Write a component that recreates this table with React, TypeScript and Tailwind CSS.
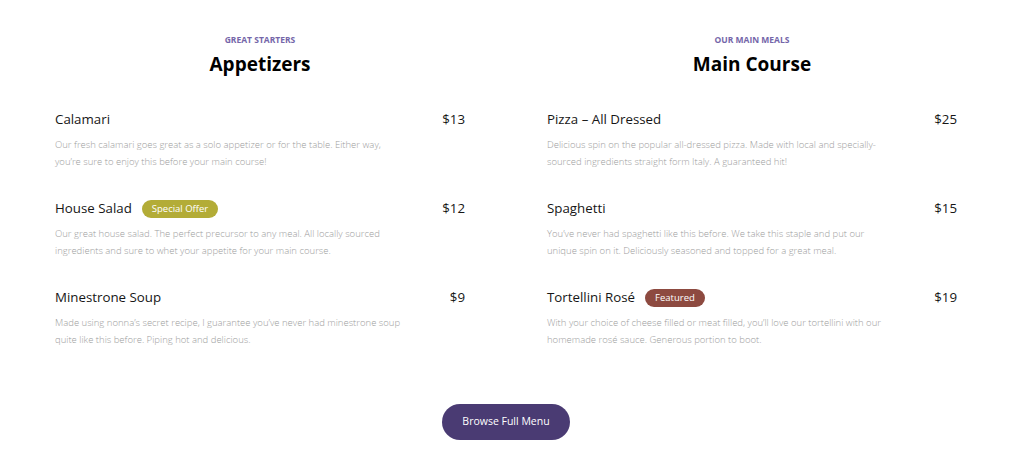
import React from "react";

type Item = { name: string; price: string; desc: string; w?: string; badge?: { text: string; cls: string } };

const appetizers: Item[] = [
  {
    name: "Calamari",
    price: "$13",
    desc: "Our fresh calamari goes great as a solo appetizer or for the table. Either way, you\u2019re sure to enjoy this before your main course!",
  },
  {
    name: "House Salad",
    price: "$12",
    desc: "Our great house salad. The perfect precursor to any meal. All locally sourced ingredients and sure to whet your appetite for your main course.",
    badge: { text: "Special Offer", cls: "bg-[#b3ac37]" },
  },
  {
    name: "Minestrone Soup",
    price: "$9",
    desc: "Made using nonna\u2019s secret recipe, I guarantee you\u2019ve never had minestrone soup quite like this before. Piping hot and delicious.",
    w: "w-[354px]",
  },
];

const mains: Item[] = [
  {
    name: "Pizza \u2013 All Dressed",
    price: "$25",
    desc: "Delicious spin on the popular all-dressed pizza. Made with local and specially-sourced ingredients straight form Italy. A guaranteed hit!",
  },
  {
    name: "Spaghetti",
    price: "$15",
    desc: "You\u2019ve never had spaghetti like this before. We take this staple and put our unique spin on it. Deliciously seasoned and topped for a great meal.",
  },
  {
    name: "Tortellini Ros\u00e9",
    price: "$19",
    desc: "With your choice of cheese filled or meat filled, you\u2019ll love our tortellini with our homemade ros\u00e9 sauce. Generous portion to boot.",
    badge: { text: "Featured", cls: "bg-[#8d4a40]" },
  },
];

function Column({ kicker, title, items }: { kicker: string; title: string; items: Item[] }) {
  return (
    <div className="w-[410px] flex flex-col">
      <div className="flex flex-col items-center">
        <div className="text-[8.5px] font-bold text-[#7466a9] leading-[12px] mt-[34px]">{kicker}</div>
        <div className="text-[19px] font-bold text-black leading-[24px] mt-[6px]">{title}</div>
      </div>
      <div className="flex flex-col mt-[33px] gap-[28px]">
        {items.map((it) => (
          <div key={it.name} className="flex flex-col">
            <div className="flex items-center justify-between h-[22px]">
              <div className="flex items-center">
                <span className="text-[13.3px] text-[#161616]">{it.name}</span>
                {it.badge && (
                  <span
                    className={`ml-[10px] h-[18px] px-[10px] rounded-full text-white text-[9.5px] leading-[18px] ${it.badge.cls}`}
                  >
                    {it.badge.text}
                  </span>
                )}
              </div>
              <span className="text-[13.3px] text-[#161616]">{it.price}</span>
            </div>
            <p className={`mt-[5px] text-[9.5px] font-light leading-[17px] text-[#9d9d9d] ${it.w ?? "w-[344px]"}`}>
              {it.desc}
            </p>
          </div>
        ))}
      </div>
    </div>
  );
}

export default function App() {
  return (
    <div
      className="w-[1024px] h-[460px] bg-white pl-[55px] flex flex-col"
      style={{ fontFamily: '"Open Sans", "Noto Sans", sans-serif' }}
    >
      <div className="flex gap-[82px]">
        <Column kicker="GREAT STARTERS" title="Appetizers" items={appetizers} />
        <Column kicker="OUR MAIN MEALS" title="Main Course" items={mains} />
      </div>
      <div className="w-[902px] flex justify-center mt-[56px]">
        <button className="w-[128px] h-[36px] rounded-full bg-[#4a3b73] text-white text-[10.5px]">Browse Full Menu</button>
      </div>
    </div>
  );
}
